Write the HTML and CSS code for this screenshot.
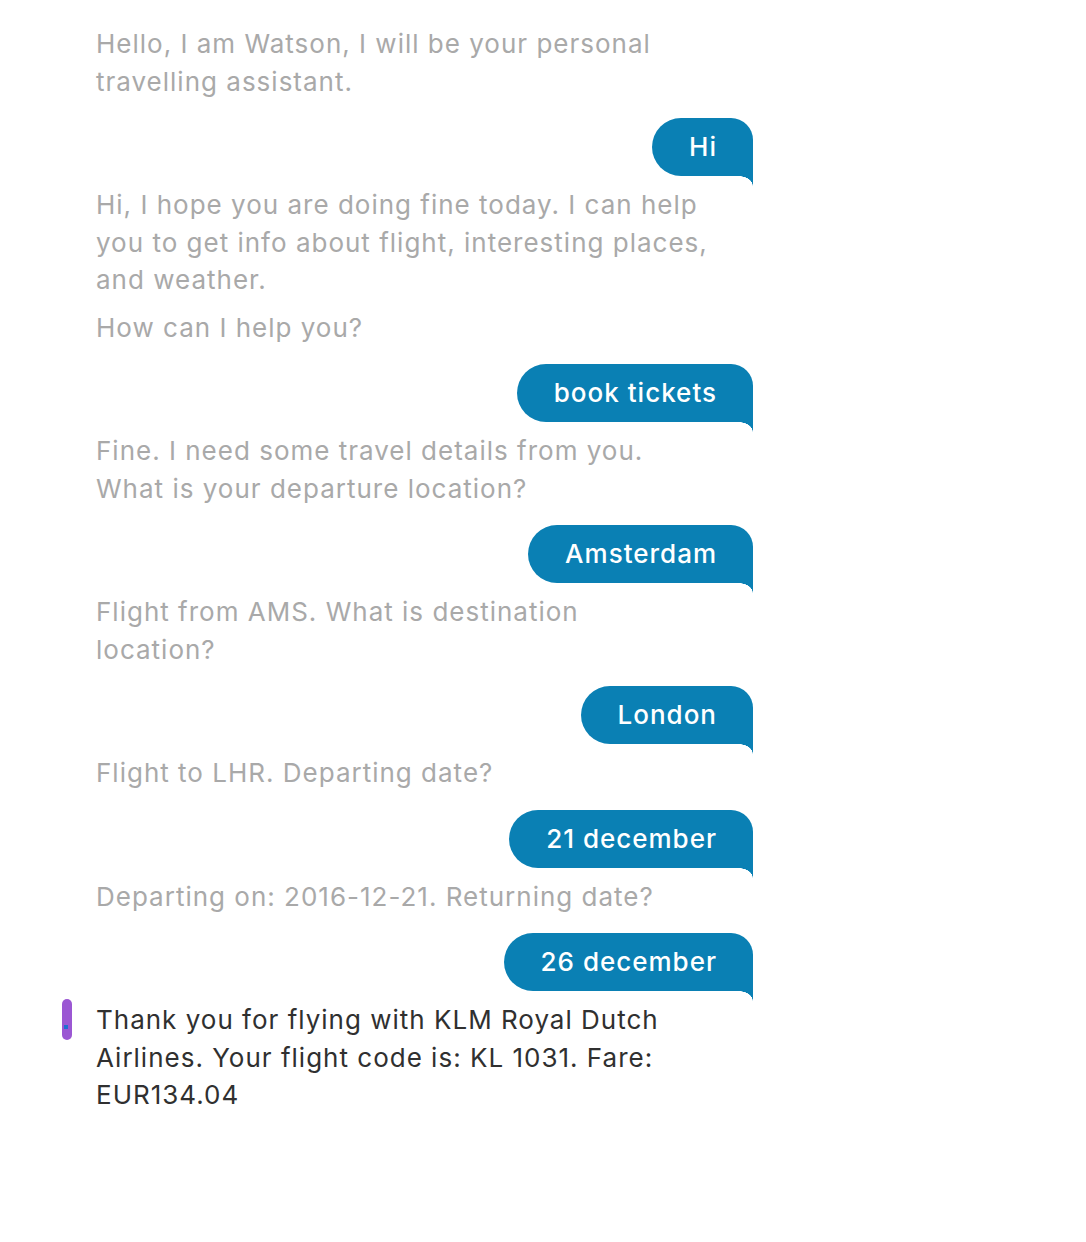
FILE: index.html
```html
<!DOCTYPE html>
<html lang="en">
<head>
<meta charset="utf-8">
<title>Watson travel assistant</title>
<link rel="stylesheet" href="styles.css">
</head>
<body>
<main class="chat">
  <div class="bot">
    <span class="marker"></span>
    <div class="bot-text">
      <p>Hello, I am Watson, I will be your personal<br>travelling assistant.</p>
    </div>
  </div>
  <div class="user"><div class="bubble">Hi</div></div>
  <div class="bot">
    <span class="marker"></span>
    <div class="bot-text">
      <p>Hi, I hope you are doing fine today. I can help<br>you to get info about flight, interesting places,<br>and weather.</p>
      <p>How can I help you?</p>
    </div>
  </div>
  <div class="user"><div class="bubble">book tickets</div></div>
  <div class="bot">
    <span class="marker"></span>
    <div class="bot-text">
      <p>Fine. I need some travel details from you.<br>What is your departure location?</p>
    </div>
  </div>
  <div class="user"><div class="bubble">Amsterdam</div></div>
  <div class="bot">
    <span class="marker"></span>
    <div class="bot-text">
      <p>Flight from AMS. What is destination<br>location?</p>
    </div>
  </div>
  <div class="user"><div class="bubble">London</div></div>
  <div class="bot">
    <span class="marker"></span>
    <div class="bot-text">
      <p>Flight to LHR. Departing date?</p>
    </div>
  </div>
  <div class="user"><div class="bubble">21 december</div></div>
  <div class="bot">
    <span class="marker"></span>
    <div class="bot-text">
      <p>Departing on: 2016-12-21. Returning date?</p>
    </div>
  </div>
  <div class="user"><div class="bubble">26 december</div></div>
  <div class="bot latest">
    <span class="marker active"><span class="dot"></span></span>
    <div class="bot-text">
      <p>Thank you for flying with KLM Royal Dutch<br>Airlines. Your flight code is: KL 1031. Fare:<br>EUR134.04</p>
    </div>
  </div>
</main>
</body>
</html>
```
FILE: styles.css
```css
html, body {
  margin: 0;
  padding: 0;
  background: #ffffff;
}

body {
  font-family: Inter, "Liberation Sans", Arial, sans-serif;
  font-size: 26px;
  line-height: 37.5px;
  letter-spacing: 1px;
}

.chat {
  width: 691px;
  margin-left: 62px;
  padding-top: 25px;
  display: flex;
  flex-direction: column;
}

.bot {
  display: flex;
  gap: 24px;
  align-items: flex-start;
}

.marker {
  flex: 0 0 10px;
  width: 10px;
}

.marker.active {
  height: 41px;
  margin-top: -2px;
  background: #9b57d3;
  border-radius: 5px;
  display: flex;
  align-items: flex-end;
  padding-bottom: 11px;
  box-sizing: border-box;
}

.marker .dot {
  width: 4px;
  height: 4px;
  margin-left: 2px;
  background: #1f6fd0;
}

.bot-text {
  max-width: 657px;
  color: #a9a9a9;
  white-space: nowrap;
}

.bot-text p {
  margin: 0;
}

.bot-text p + p {
  margin-top: 10px;
}

.latest .bot-text {
  color: #303030;
}

.user {
  display: flex;
  justify-content: flex-end;
  margin-top: 18px;
  margin-bottom: 10px;
}

.bubble {
  position: relative;
  background: #0a80b4;
  color: #ffffff;
  font-weight: 500;
  padding: 10px 36px 10px 37px;
  border-radius: 29px 22px 0 29px;
  line-height: 38px;
}

.bubble::after {
  content: "";
  position: absolute;
  right: 0;
  bottom: -10px;
  width: 14px;
  height: 10px;
  background: radial-gradient(ellipse 14px 10px at 0 100%, transparent 96%, #0a80b4 100%);
}
```
